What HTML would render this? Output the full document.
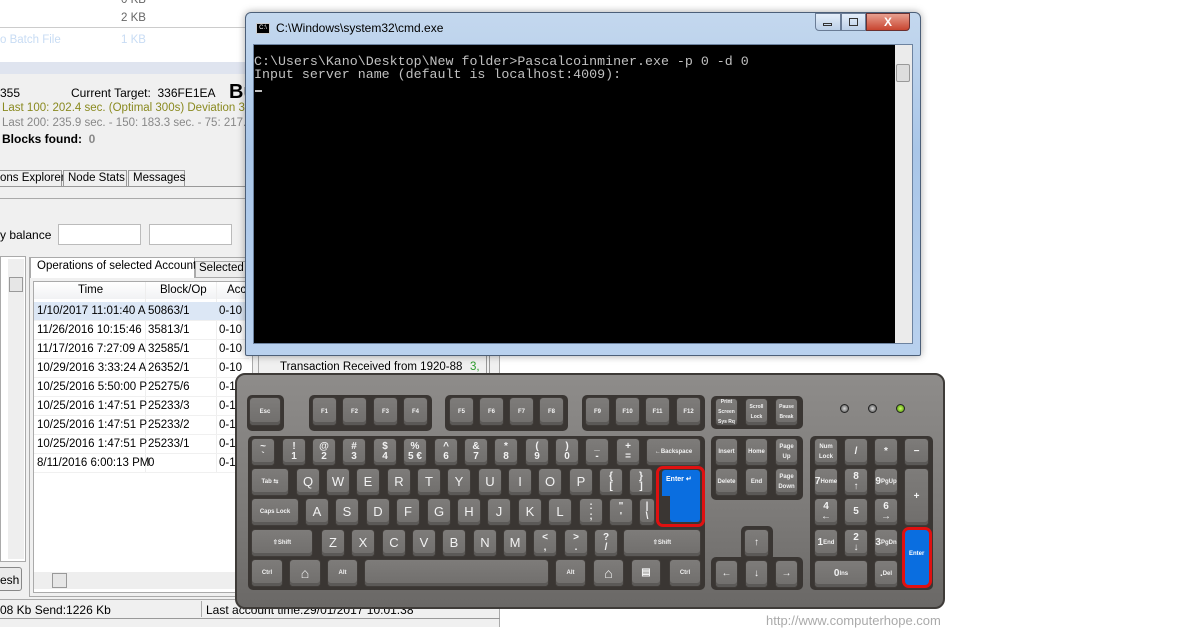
<!DOCTYPE html>
<html><head><meta charset="utf-8"><style>
*{margin:0;padding:0;box-sizing:border-box}
body{width:1200px;height:625px;overflow:hidden;background:#fff;position:relative;font-family:"Liberation Sans",sans-serif;font-size:12px;color:#000}
.a{position:absolute}
.t{position:absolute;white-space:nowrap;font-size:11.5px}
.k{position:absolute;background:linear-gradient(#7e7c7a,#706e6c);border-radius:3px;box-shadow:inset 0 -3px 0 #5b5957,0 0 0 1px #403c39;color:#f2f2f2;font-size:10px;display:flex;align-items:center;justify-content:center;text-align:center;line-height:10px;font-weight:bold}
.k.s{font-size:6px;font-weight:bold}
.k.l{font-size:13px;font-weight:normal}
.g{position:absolute;background:#3a3633;border-radius:5px}
.row{position:absolute;left:34px;width:215px;height:19px;border-bottom:1px solid #f0f0f0;font-size:11.5px}
.row span{position:absolute;top:3px;white-space:nowrap;overflow:hidden}
</style></head><body>
<div class="t" style="left:121px;top:-6px;color:#666">0 KB</div>
<div class="t" style="left:121px;top:12px;color:#666">2 KB</div>
<div class="a" style="left:0;top:27px;width:500px;height:600px;background:#f0f0f0;border-right:1px solid #aaa"></div>
<div class="a" style="left:0;top:27px;width:500px;height:35px;background:#fff;border-top:1px solid #ccc"></div>
<div class="t" style="left:0;top:34px;color:#c8dcf4">o Batch File</div>
<div class="t" style="left:121px;top:34px;color:#c8dcf4">1 KB</div>
<div class="a" style="left:0;top:62px;width:500px;height:12px;background:#dfe4ef"></div>
<div class="t" style="left:0;top:86px;font-size:12px">355</div>
<div class="t" style="left:71px;top:86px;font-size:12px">Current Target:&nbsp; 336FE1EA</div>
<div class="t" style="left:229px;top:81px;font-size:20px;font-weight:bold">Bu</div>
<div class="t" style="left:2px;top:102px;color:#8a8a20;font-size:11.5px">Last 100: 202.4 sec. (Optimal 300s) Deviation 32.5</div>
<div class="t" style="left:2px;top:117px;color:#888;font-size:11.5px">Last 200: 235.9 sec. - 150: 183.3 sec. - 75: 217.6</div>
<div class="t" style="left:2px;top:132px;font-weight:bold;font-size:12px">Blocks found:&nbsp; <span style="color:#888">0</span></div>
<div class="a" style="left:0;top:186px;width:250px;height:1px;background:#999"></div>
<div class="a" style="left:-2px;top:170px;width:64px;height:17px;border:1px solid #999;background:#f0f0f0"></div>
<div class="t" style="left:0;top:172px">ons Explorer</div>
<div class="a" style="left:63px;top:170px;width:64px;height:17px;border:1px solid #999;background:#f0f0f0"></div>
<div class="t" style="left:68px;top:172px">Node Stats</div>
<div class="a" style="left:128px;top:170px;width:57px;height:17px;border:1px solid #999;background:#f0f0f0"></div>
<div class="t" style="left:133px;top:172px">Messages</div>
<div class="a" style="left:0;top:198px;width:250px;height:1px;background:#aaa"></div>
<div class="t" style="left:0;top:228px;font-size:12px">y balance</div>
<div class="a" style="left:58px;top:224px;width:83px;height:21px;background:#fff;border:1px solid #bbb"></div>
<div class="a" style="left:149px;top:224px;width:83px;height:21px;background:#fff;border:1px solid #bbb"></div>
<div class="a" style="left:0;top:256px;width:26px;height:306px;background:#fff;border:1px solid #aaa"></div>
<div class="a" style="left:8px;top:259px;width:16px;height:300px;background:#eee"></div>
<div class="a" style="left:9px;top:277px;width:14px;height:15px;background:#e6e6e6;border:1px solid #999"></div>
<div class="a" style="left:29px;top:257px;width:230px;height:340px;border:1px solid #aaa"></div>
<div class="a" style="left:30px;top:257px;width:165px;height:21px;background:#fff;border:1px solid #aaa;border-bottom:none"></div>
<div class="t" style="left:37px;top:260px">Operations of selected Account</div>
<div class="a" style="left:195px;top:261px;width:55px;height:17px;background:#eee;border:1px solid #aaa"></div>
<div class="t" style="left:199px;top:262px">Selected</div>
<div class="a" style="left:33px;top:281px;width:220px;height:312px;background:#fff;border:1px solid #aaa"></div>
<div class="a" style="left:34px;top:282px;width:215px;height:17px;background:linear-gradient(#fff,#f1f2f4)"></div>
<div class="t" style="left:78px;top:284px">Time</div>
<div class="t" style="left:160px;top:284px">Block/Op</div>
<div class="t" style="left:227px;top:284px">Acc</div>
<div class="a" style="left:145px;top:282px;width:1px;height:190px;background:#eee"></div>
<div class="a" style="left:216px;top:282px;width:1px;height:190px;background:#eee"></div>
<div class="row" style="top:302px;background:#dce7f5"><span style="left:3px">1/10/2017 11:01:40 A</span><span style="left:114px">50863/1</span><span style="left:185px">0-10</span></div>
<div class="row" style="top:321px"><span style="left:3px;width:108px">11/26/2016 10:15:46 I</span><span style="left:114px">35813/1</span><span style="left:185px">0-10</span></div>
<div class="row" style="top:340px"><span style="left:3px">11/17/2016 7:27:09 A</span><span style="left:114px">32585/1</span><span style="left:185px">0-10</span></div>
<div class="row" style="top:359px"><span style="left:3px">10/29/2016 3:33:24 A</span><span style="left:114px">26352/1</span><span style="left:185px">0-10</span></div>
<div class="row" style="top:378px"><span style="left:3px">10/25/2016 5:50:00 P</span><span style="left:114px">25275/6</span><span style="left:185px">0-1</span></div>
<div class="row" style="top:397px"><span style="left:3px">10/25/2016 1:47:51 P</span><span style="left:114px">25233/3</span><span style="left:185px">0-1</span></div>
<div class="row" style="top:416px"><span style="left:3px">10/25/2016 1:47:51 P</span><span style="left:114px">25233/2</span><span style="left:185px">0-1</span></div>
<div class="row" style="top:435px"><span style="left:3px">10/25/2016 1:47:51 P</span><span style="left:114px">25233/1</span><span style="left:185px">0-1</span></div>
<div class="row" style="top:454px"><span style="left:3px">8/11/2016 6:00:13 PM</span><span style="left:114px">0</span><span style="left:185px">0-1</span></div>
<div class="a" style="left:34px;top:572px;width:215px;height:17px;background:#eee"></div>
<div class="a" style="left:52px;top:573px;width:15px;height:15px;background:#e6e6e6;border:1px solid #999"></div>
<div class="a" style="left:-3px;top:567px;width:25px;height:24px;border:1px solid #888;border-radius:3px;background:#eaeaea"></div>
<div class="t" style="left:0;top:573px;font-size:12px">esh</div>
<div class="a" style="left:0;top:599px;width:500px;height:1px;background:#aaa"></div>
<div class="t" style="left:0;top:603px;font-size:12px">08 Kb Send:1226 Kb</div>
<div class="a" style="left:201px;top:601px;width:1px;height:16px;background:#aaa"></div>
<div class="t" style="left:206px;top:603px;font-size:12px">Last account time:29/01/2017 10:01:38</div>
<div class="a" style="left:0;top:618px;width:500px;height:1px;background:#999"></div>
<div class="t" style="left:280px;top:361px">Transaction Received from 1920-88</div>
<div class="t" style="left:470px;top:361px;color:#2a9a2a">3,</div>
<div class="a" style="left:486px;top:355px;width:1px;height:20px;background:#999"></div>
<div class="a" style="left:489px;top:355px;width:1px;height:20px;background:#999"></div>
<div class="a" style="left:245px;top:12px;width:676px;height:344px;border-radius:6px 6px 2px 2px;background:linear-gradient(#c4d8ee,#a9c6e8 40%,#b9d1ee);border:1px solid #4c5f78;box-shadow:0 0 8px rgba(0,0,0,.35)"></div>
<div class="a" style="left:256px;top:23px;width:14px;height:11px;background:#000;border:1px solid #ccc;color:#fff;font-size:6px;line-height:9px;text-align:center">C:\</div>
<div class="t" style="left:276px;top:21px;font-size:12px">C:\Windows\system32\cmd.exe</div>
<div class="a" style="left:815px;top:13px;width:26px;height:18px;border:1px solid #6a7c96;border-radius:0 0 0 4px;background:linear-gradient(#e4eefa,#bcd0e8)"></div>
<div class="a" style="left:841px;top:13px;width:25px;height:18px;border:1px solid #6a7c96;background:linear-gradient(#e4eefa,#bcd0e8)"></div>
<div class="a" style="left:866px;top:13px;width:44px;height:18px;border:1px solid #6a3030;border-radius:0 0 4px 0;background:linear-gradient(#e8a090,#c84530);color:#fff;font-weight:bold;text-align:center;font-size:12px;line-height:16px">X</div>
<div class="a" style="left:823px;top:23px;width:9px;height:3px;border:1px solid #333"></div>
<div class="a" style="left:849px;top:18px;width:9px;height:8px;border:1px solid #333"></div>
<div class="a" style="left:253px;top:44px;width:660px;height:300px;background:#000;border:1px solid #6d83a0"></div>
<div class="a" style="left:895px;top:45px;width:17px;height:298px;background:#ebebeb"></div>
<div class="a" style="left:896px;top:64px;width:14px;height:18px;background:#ddd;border:1px solid #999;border-radius:2px"></div>
<div class="a" style="left:254px;top:56px;color:#c0c0c0;font-family:'Liberation Mono',monospace;font-size:13.3px;line-height:12.5px;white-space:pre">C:\Users\Kano\Desktop\New folder>Pascalcoinminer.exe -p 0 -d 0
Input server name (default is localhost:4009):</div>
<div class="a" style="left:255px;top:90px;width:7px;height:2px;background:#c0c0c0"></div>
<div class="a" style="left:235px;top:373px;width:710px;height:236px;border-radius:10px;background:linear-gradient(#8e8c8a,#7c7a78 60%,#6a6866);border:2px solid #3e3b38"></div>
<div class="g" style="left:247px;top:395px;width:37px;height:36px"></div>
<div class="g" style="left:309px;top:395px;width:123px;height:36px"></div>
<div class="g" style="left:445px;top:395px;width:123px;height:36px"></div>
<div class="g" style="left:582px;top:395px;width:123px;height:36px"></div>
<div class="g" style="left:711px;top:396px;width:92px;height:33px"></div>
<div class="g" style="left:248px;top:436px;width:457px;height:154px"></div>
<div class="g" style="left:711px;top:436px;width:92px;height:64px"></div>
<div class="g" style="left:741px;top:526px;width:32px;height:35px"></div>
<div class="g" style="left:711px;top:557px;width:92px;height:33px"></div>
<div class="g" style="left:810px;top:436px;width:123px;height:154px"></div>
<div class="k s" style="left:250px;top:398px;width:30px;height:27px">Esc</div>
<div class="k s" style="left:313px;top:398px;width:23px;height:27px">F1</div>
<div class="k s" style="left:343px;top:398px;width:23px;height:27px">F2</div>
<div class="k s" style="left:374px;top:398px;width:23px;height:27px">F3</div>
<div class="k s" style="left:404px;top:398px;width:23px;height:27px">F4</div>
<div class="k s" style="left:450px;top:398px;width:23px;height:27px">F5</div>
<div class="k s" style="left:480px;top:398px;width:23px;height:27px">F6</div>
<div class="k s" style="left:510px;top:398px;width:23px;height:27px">F7</div>
<div class="k s" style="left:540px;top:398px;width:23px;height:27px">F8</div>
<div class="k s" style="left:586px;top:398px;width:23px;height:27px">F9</div>
<div class="k s" style="left:616px;top:398px;width:23px;height:27px">F10</div>
<div class="k s" style="left:646px;top:398px;width:23px;height:27px">F11</div>
<div class="k s" style="left:677px;top:398px;width:23px;height:27px">F12</div>
<div class="k s" style="left:716px;top:399px;width:21px;height:26px;font-size:5px">Print Screen Sys Rq</div>
<div class="k s" style="left:746px;top:399px;width:21px;height:26px;font-size:5px">Scroll Lock</div>
<div class="k s" style="left:776px;top:399px;width:21px;height:26px;font-size:5px">Pause Break</div>
<div class="k" style="left:252px;top:439px;width:22px;height:26px">~<br>`</div>
<div class="k" style="left:283px;top:439px;width:22px;height:26px">!<br>1</div>
<div class="k" style="left:313px;top:439px;width:22px;height:26px">@<br>2</div>
<div class="k" style="left:343px;top:439px;width:22px;height:26px">#<br>3</div>
<div class="k" style="left:374px;top:439px;width:22px;height:26px">$<br>4</div>
<div class="k" style="left:404px;top:439px;width:22px;height:26px">%<br>5 €</div>
<div class="k" style="left:435px;top:439px;width:22px;height:26px">^<br>6</div>
<div class="k" style="left:465px;top:439px;width:22px;height:26px">&amp;<br>7</div>
<div class="k" style="left:495px;top:439px;width:22px;height:26px">*<br>8</div>
<div class="k" style="left:526px;top:439px;width:22px;height:26px">(<br>9</div>
<div class="k" style="left:556px;top:439px;width:22px;height:26px">)<br>0</div>
<div class="k" style="left:586px;top:439px;width:22px;height:26px">_<br>-</div>
<div class="k" style="left:617px;top:439px;width:22px;height:26px">+<br>=</div>
<div class="k s" style="left:647px;top:439px;width:53px;height:26px">←Backspace</div>
<div class="k s" style="left:252px;top:469px;width:36px;height:26px">Tab ⇆</div>
<div class="k l" style="left:297px;top:469px;width:22px;height:26px">Q</div>
<div class="k l" style="left:327px;top:469px;width:22px;height:26px">W</div>
<div class="k l" style="left:357px;top:469px;width:22px;height:26px">E</div>
<div class="k l" style="left:388px;top:469px;width:22px;height:26px">R</div>
<div class="k l" style="left:418px;top:469px;width:22px;height:26px">T</div>
<div class="k l" style="left:448px;top:469px;width:22px;height:26px">Y</div>
<div class="k l" style="left:479px;top:469px;width:22px;height:26px">U</div>
<div class="k l" style="left:509px;top:469px;width:22px;height:26px">I</div>
<div class="k l" style="left:539px;top:469px;width:22px;height:26px">O</div>
<div class="k l" style="left:570px;top:469px;width:22px;height:26px">P</div>
<div class="k" style="left:600px;top:469px;width:22px;height:26px">{<br>[</div>
<div class="k" style="left:630px;top:469px;width:22px;height:26px">}<br>]</div>
<div class="a" style="left:656px;top:466px;width:49px;height:61px;border:3px solid #e01010;border-radius:7px"></div>
<div class="a" style="left:662px;top:470px;width:38px;height:26px;background:#0a6ee0;border-radius:3px 3px 0 0"></div>
<div class="a" style="left:670px;top:494px;width:30px;height:28px;background:#0a6ee0;border-radius:0 0 3px 3px"></div>
<div class="t" style="left:666px;top:475px;color:#fff;font-size:7px;font-weight:bold">Enter ↵</div>
<div class="k s" style="left:252px;top:499px;width:46px;height:26px">Caps Lock</div>
<div class="k l" style="left:306px;top:499px;width:22px;height:26px">A</div>
<div class="k l" style="left:336px;top:499px;width:22px;height:26px">S</div>
<div class="k l" style="left:367px;top:499px;width:22px;height:26px">D</div>
<div class="k l" style="left:397px;top:499px;width:22px;height:26px">F</div>
<div class="k l" style="left:428px;top:499px;width:22px;height:26px">G</div>
<div class="k l" style="left:458px;top:499px;width:22px;height:26px">H</div>
<div class="k l" style="left:488px;top:499px;width:22px;height:26px">J</div>
<div class="k l" style="left:519px;top:499px;width:22px;height:26px">K</div>
<div class="k l" style="left:549px;top:499px;width:22px;height:26px">L</div>
<div class="k" style="left:580px;top:499px;width:22px;height:26px">:<br>;</div>
<div class="k" style="left:610px;top:499px;width:22px;height:26px">"<br>'</div>
<div class="k" style="left:640px;top:499px;width:14px;height:26px">|<br>\</div>
<div class="k s" style="left:252px;top:530px;width:60px;height:26px">⇧Shift</div>
<div class="k l" style="left:322px;top:530px;width:22px;height:26px">Z</div>
<div class="k l" style="left:352px;top:530px;width:22px;height:26px">X</div>
<div class="k l" style="left:383px;top:530px;width:22px;height:26px">C</div>
<div class="k l" style="left:413px;top:530px;width:22px;height:26px">V</div>
<div class="k l" style="left:443px;top:530px;width:22px;height:26px">B</div>
<div class="k l" style="left:474px;top:530px;width:22px;height:26px">N</div>
<div class="k l" style="left:504px;top:530px;width:22px;height:26px">M</div>
<div class="k" style="left:534px;top:530px;width:22px;height:26px">&lt;<br>,</div>
<div class="k" style="left:565px;top:530px;width:22px;height:26px">&gt;<br>.</div>
<div class="k" style="left:595px;top:530px;width:22px;height:26px">?<br>/</div>
<div class="k s" style="left:624px;top:530px;width:76px;height:26px">⇧Shift</div>
<div class="k s" style="left:252px;top:560px;width:30px;height:26px">Ctrl</div>
<div class="k" style="left:290px;top:560px;width:30px;height:26px;font-size:14px">⌂</div>
<div class="k s" style="left:328px;top:560px;width:29px;height:26px">Alt</div>
<div class="k" style="left:365px;top:560px;width:183px;height:26px"></div>
<div class="k s" style="left:556px;top:560px;width:29px;height:26px">Alt</div>
<div class="k" style="left:594px;top:560px;width:29px;height:26px;font-size:14px">⌂</div>
<div class="k" style="left:632px;top:560px;width:28px;height:26px">▤</div>
<div class="k s" style="left:670px;top:560px;width:30px;height:26px">Ctrl</div>
<div class="k s" style="left:716px;top:439px;width:21px;height:26px">Insert</div>
<div class="k s" style="left:746px;top:439px;width:21px;height:26px">Home</div>
<div class="k s" style="left:776px;top:439px;width:21px;height:26px">Page Up</div>
<div class="k s" style="left:716px;top:469px;width:21px;height:26px">Delete</div>
<div class="k s" style="left:746px;top:469px;width:21px;height:26px">End</div>
<div class="k s" style="left:776px;top:469px;width:21px;height:26px">Page Down</div>
<div class="k" style="left:745px;top:530px;width:23px;height:26px">↑</div>
<div class="k" style="left:716px;top:561px;width:21px;height:26px">←</div>
<div class="k" style="left:746px;top:561px;width:21px;height:26px">↓</div>
<div class="k" style="left:776px;top:561px;width:21px;height:26px">→</div>
<div class="a" style="left:840px;top:404px;width:9px;height:9px;border-radius:50%;background:radial-gradient(#ddd,#444);border:1px solid #222"></div>
<div class="a" style="left:868px;top:404px;width:9px;height:9px;border-radius:50%;background:radial-gradient(#ddd,#444);border:1px solid #222"></div>
<div class="a" style="left:896px;top:404px;width:9px;height:9px;border-radius:50%;background:radial-gradient(#cf6,#480);border:1px solid #222"></div>
<div class="k s" style="left:815px;top:439px;width:22px;height:26px">Num Lock</div>
<div class="k" style="left:845px;top:439px;width:22px;height:26px">/</div>
<div class="k" style="left:875px;top:439px;width:22px;height:26px">*</div>
<div class="k" style="left:905px;top:439px;width:23px;height:26px">−</div>
<div class="k" style="left:815px;top:469px;width:22px;height:26px">7<br><span style="font-size:6px">Home</span></div>
<div class="k" style="left:845px;top:469px;width:22px;height:26px">8<br>↑</div>
<div class="k" style="left:875px;top:469px;width:22px;height:26px">9<br><span style="font-size:6px">PgUp</span></div>
<div class="k" style="left:905px;top:469px;width:23px;height:56px">+</div>
<div class="k" style="left:815px;top:499px;width:22px;height:26px">4<br>←</div>
<div class="k" style="left:845px;top:499px;width:22px;height:26px">5</div>
<div class="k" style="left:875px;top:499px;width:22px;height:26px">6<br>→</div>
<div class="k" style="left:815px;top:530px;width:22px;height:26px">1<br><span style="font-size:6px">End</span></div>
<div class="k" style="left:845px;top:530px;width:22px;height:26px">2<br>↓</div>
<div class="k" style="left:875px;top:530px;width:22px;height:26px">3<br><span style="font-size:6px">PgDn</span></div>
<div class="k" style="left:815px;top:561px;width:52px;height:26px">0 <span style="font-size:6px">Ins</span></div>
<div class="k" style="left:875px;top:561px;width:22px;height:26px">.<br><span style="font-size:6px">Del</span></div>
<div class="a" style="left:902px;top:527px;width:30px;height:61px;border:3px solid #e01010;border-radius:7px;background:#0a6ee0"></div>
<div class="t" style="left:909px;top:551px;color:#fff;font-size:6px;font-weight:bold">Enter</div>
<div class="t" style="left:766px;top:613px;color:#aaa;font-size:13px">http://www.computerhope.com</div>
</body></html>
